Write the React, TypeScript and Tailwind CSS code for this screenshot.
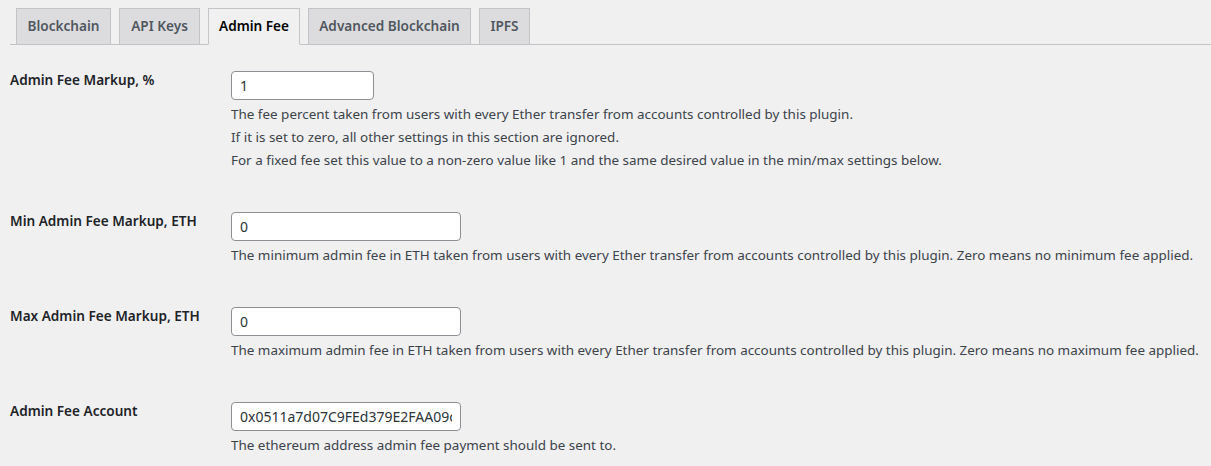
import React from "react";

const tabs = [
  { label: "Blockchain", w: "w-[95px]" },
  { label: "API Keys", w: "w-[81px]" },
  { label: "Admin Fee", w: "w-[92px]", active: true },
  { label: "Advanced Blockchain", w: "w-[163px]" },
  { label: "IPFS", w: "w-[51px]" },
];

interface RowProps {
  label: string;
  value: string;
  wide?: boolean;
  lines: string[];
}

function SettingRow({ label, value, wide = true, lines }: RowProps) {
  return (
    <div className="flex">
      <div className="w-[231px] shrink-0 pl-[10px] text-[13.6px] leading-[18px] font-semibold text-[#1d2327]">
        {label}
      </div>
      <div className="flex flex-col">
        <input
          type="text"
          defaultValue={value}
          className={`${wide ? "w-[230px]" : "w-[143px]"} h-[29px] rounded-[4px] border border-[#8c8f94] bg-white px-[8px] text-[14px] text-[#2c3338] outline-none`}
        />
        <div className="mt-[3px] text-[13.45px] leading-[23px] text-[#3c434a]">
          {lines.map((l) => (
            <p key={l}>{l}</p>
          ))}
        </div>
      </div>
    </div>
  );
}

export default function App() {
  return (
    <div className="min-h-screen bg-[#f0f0f1] font-['Noto_Sans',sans-serif]">
      {/* Tabs */}
      <div className="ml-[10px] flex items-end gap-[8px] border-b border-[#c3c4c7] pt-[8px] pl-[6px]">
        {tabs.map((t) => (
          <div
            key={t.label}
            className={`${t.w} -mb-px h-[37px] border border-[#c3c4c7] text-center text-[13.6px] leading-[33px] font-semibold ${
              t.active
                ? "border-b-[#f0f0f1] bg-[#f0f0f1] text-black"
                : "bg-[#dcdcde] text-[#50575e]"
            }`}
          >
            {t.label}
          </div>
        ))}
      </div>

      {/* Settings */}
      <div className="mt-[26px] flex flex-col gap-[40px]">
        <SettingRow
          label="Admin Fee Markup, %"
          value="1"
          wide={false}
          lines={[
            "The fee percent taken from users with every Ether transfer from accounts controlled by this plugin.",
            "If it is set to zero, all other settings in this section are ignored.",
            "For a fixed fee set this value to a non-zero value like 1 and the same desired value in the min/max settings below.",
          ]}
        />
        <SettingRow
          label="Min Admin Fee Markup, ETH"
          value="0"
          lines={[
            "The minimum admin fee in ETH taken from users with every Ether transfer from accounts controlled by this plugin. Zero means no minimum fee applied.",
          ]}
        />
        <SettingRow
          label="Max Admin Fee Markup, ETH"
          value="0"
          lines={[
            "The maximum admin fee in ETH taken from users with every Ether transfer from accounts controlled by this plugin. Zero means no maximum fee applied.",
          ]}
        />
        <SettingRow
          label="Admin Fee Account"
          value="0x0511a7d07C9FEd379E2FAA09c3A1d5d2C1bE4F7a"
          lines={["The ethereum address admin fee payment should be sent to."]}
        />
      </div>
    </div>
  );
}
